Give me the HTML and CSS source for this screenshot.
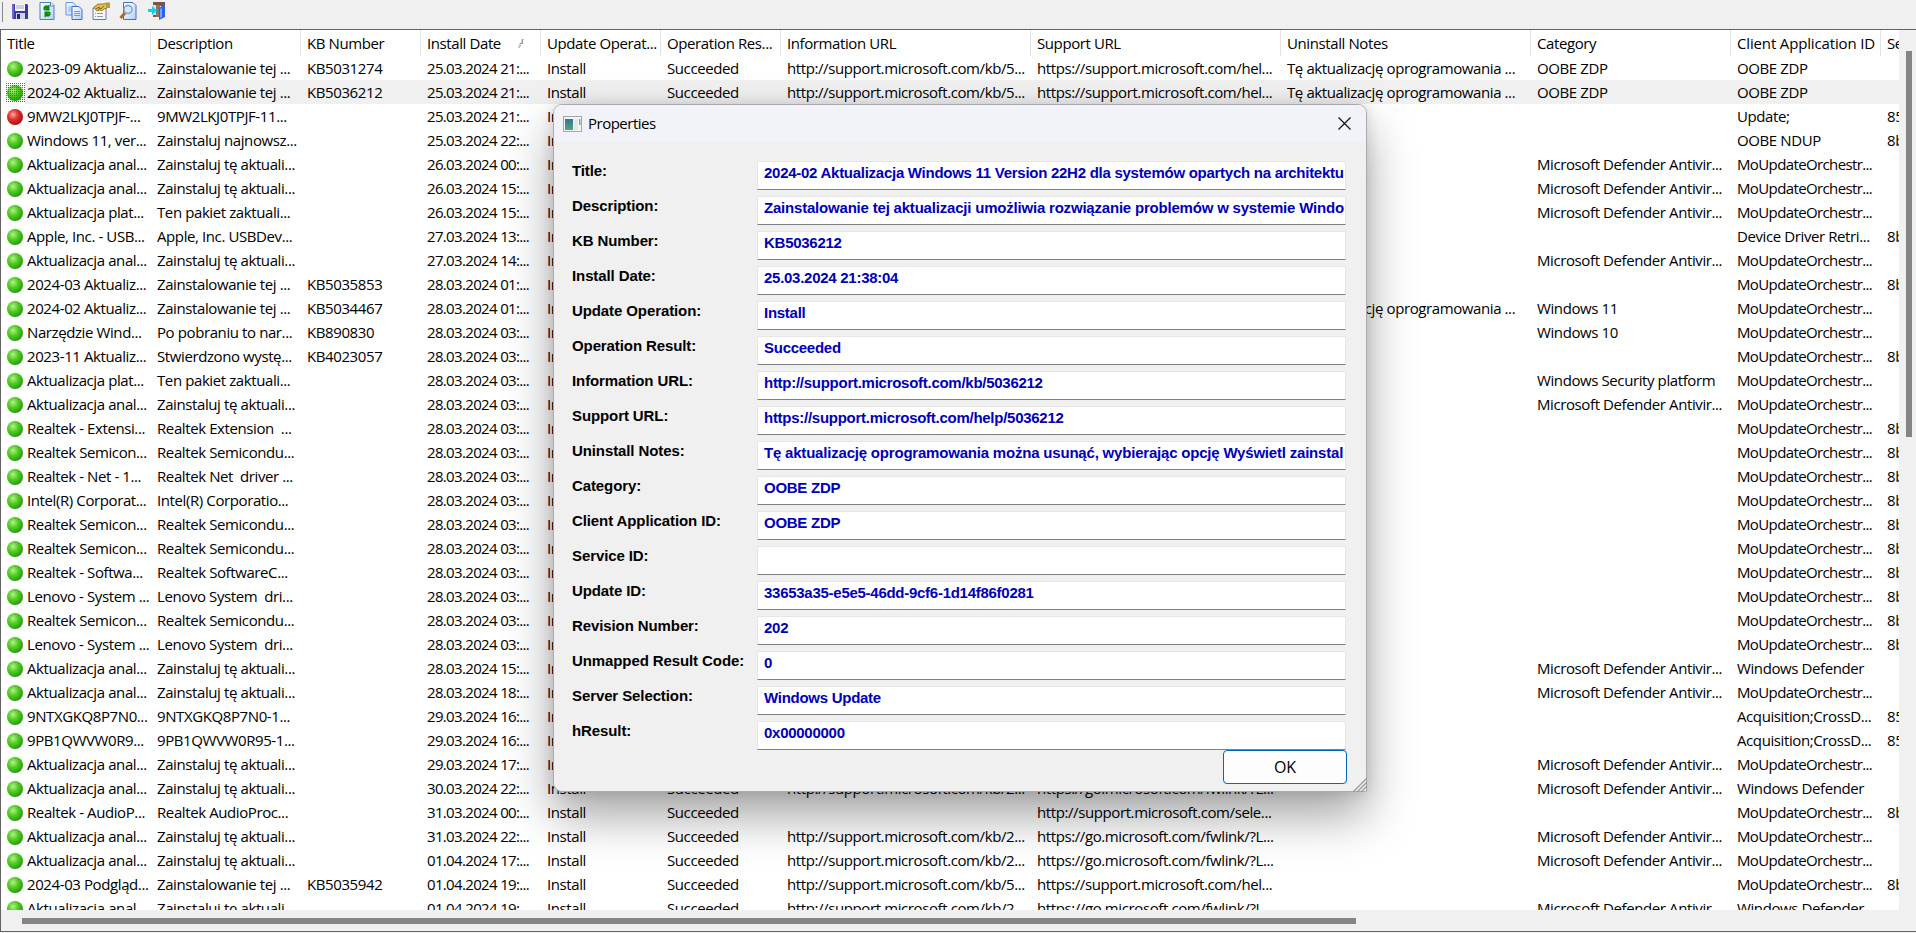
FILE: index.html
```html
<!DOCTYPE html>
<html lang="pl">
<head>
    <meta charset="UTF-8">
    <meta name="viewport" content="width=device-width, initial-scale=1.0">
    <title>Windows Update History</title>
    <link rel="stylesheet" href="styles.css">
</head>
<body>
    <div class="toolbar">
        <span class="grip"></span>
        <!-- save -->
        <svg class="tool" viewBox="0 0 18 18">
            <path d="M1 2h15l1 1v14H2l-1-1z" fill="#3a3aa4"/>
            <path d="M1 2h2v14H1z" fill="#6c6cc8"/>
            <rect x="4" y="2" width="10" height="7" fill="#f4f4f4"/>
            <path d="M5 4h8M5 6h8" stroke="#aaa"/>
            <rect x="5" y="11" width="9" height="6" fill="#cfd3e4"/>
            <rect x="6" y="12" width="3" height="5" fill="#25257c"/>
        </svg>
        <!-- refresh -->
        <svg class="tool" viewBox="0 0 18 18">
            <path d="M2 .5h11l3 3V17.500H2z" fill="url(#page)" stroke="#4f7fc4"/>
            <path d="M12.500.5v3.500h3.500" fill="#fff" stroke="#4f7fc4"/>
            <path d="M5.500 8V5L7 3.500h3l1.500-1v6h-5L8.500 6l-1 .5V8zM12.500 10v3L11 14.500H8l-1.500 1v-6h5L9.500 12l1-.5V10z" fill="#0a8a0a"/>
        </svg>
        <!-- copy -->
        <svg class="tool" viewBox="0 0 18 18">
            <path d="M1 .5h7l3 3V13H1z" fill="url(#page)" stroke="#6a94dc"/>
            <path d="M3 5h5M3 7h5M3 9h5" stroke="#8fb2ea"/>
            <path d="M7 4.500h7l3 3V17.500H7z" fill="url(#page)" stroke="#3f6fc8"/>
            <path d="M9 9.500h6M9 11.500h6M9 13.500h6" stroke="#6f9be0"/>
        </svg>
        <!-- properties -->
        <svg class="tool" viewBox="0 0 18 18">
            <path d="M1 6h13v11.500H1z" fill="#f3f7fd" stroke="#6c7c98"/>
            <path d="M3 11.500h1m1 0h6M3 14.500h1m1 0h6" stroke="#8898b4"/>
            <path d="M2 5l4-3h6l3-1v5l-3 1-2 2-2-1-3 1-2-2z" fill="#e4bd4c" stroke="#87661e" stroke-width=".8"/>
            <path d="M4 7l3-2 2 2 3-3M6 8l2-2" stroke="#6a4f16" fill="none" stroke-width=".8"/>
            <path d="M14 .5h4V6h-4z" fill="#b0a23a"/>
        </svg>
        <!-- find -->
        <svg class="tool" viewBox="0 0 18 18">
            <path d="M4.500.5H14l3 3V17.500H4.500z" fill="url(#page)" stroke="#4a6fc0"/>
            <path d="M6 11l-4.500 5" stroke="#b5642a" stroke-width="3"/>
            <circle cx="9" cy="7.500" r="4" fill="#cfeaff" stroke="#7f9cc4" stroke-width="1.400"/>
        </svg>
        <!-- exit -->
        <svg class="tool exit" viewBox="0 0 18 18">
            <path d="M5 0h12v4H5zM5 12h3v3H5z" fill="#80543a"/>
            <path d="M8 3h4v12H8z" fill="#8c7468"/>
            <path d="M5 3h3v10H5z" fill="#dcdce4"/>
            <path d="M11 6l6-4v13l-6 3z" fill="#2f62e8"/>
            <path d="M12 7l2-1v9l-2 1z" fill="#7aa2ff"/>
            <path d="M0 7h4V4l5 4.500L4 13v-3H0z" fill="#10d0ee"/>
        </svg>
        <svg class="defs" width="0" height="0">
            <defs>
                <linearGradient id="page" x1="0" y1="0" x2="1" y2="1">
                    <stop offset="0" stop-color="#fff"/>
                    <stop offset="1" stop-color="#b4d0f8"/>
                </linearGradient>
            </defs>
        </svg>
    </div>

    <div class="list">
        <div class="list-view">
            <div class="row header">
                <div>Title</div>
                <div>Description</div>
                <div>KB Number</div>
                <div>Install Date<svg class="sort" viewBox="0 0 8 9"><path d="M1 8h2V4.500h2v-4h1.500M5.500.5V5" fill="none" stroke="#999"/></svg></div>
                <div>Update Operat...</div>
                <div>Operation Res...</div>
                <div>Information URL</div>
                <div>Support URL</div>
                <div>Uninstall Notes</div>
                <div>Category</div>
                <div class="wide">Client Application ID</div>
                <div>Se</div>
            </div>
            <div id="rows"></div>
        </div>
        <div class="vscroll"><div class="vthumb"></div></div>
        <div class="hscroll"><div class="hthumb"></div></div>
    </div>

    <div class="dialog">
        <div class="titlebar">
            <svg class="app-icon" viewBox="0 0 20 16">
                <rect x=".5" y=".5" width="18" height="15" fill="#f2f4f6" stroke="#a4a8ae"/>
                <rect x="2" y="3" width="8" height="11" fill="url(#app)"/>
                <rect x="11" y="3" width="4" height="11" fill="#e4e6e8"/>
                <rect x="16" y="3" width="1.500" height="6" fill="#6fae9c"/>
                <defs>
                    <linearGradient id="app" x1="0" y1="0" x2="0" y2="1">
                        <stop offset="0" stop-color="#3d6f9e"/>
                        <stop offset="1" stop-color="#4fa878"/>
                    </linearGradient>
                </defs>
            </svg>
            <span class="caption">Properties</span>
            <svg class="close" viewBox="0 0 13 13"><path d="M.5.5l12 12M12.500.5l-12 12" stroke="#111" stroke-width="1.200"/></svg>
        </div>
        <div class="fields" id="fields"></div>
        <button class="ok">OK</button>
        <svg class="resize" viewBox="0 0 15 15"><path d="M1 15L15 1M5 15L15 5M9 15l6-6" stroke="#999" stroke-width="1.300"/></svg>
    </div>

    <script>
        const ANAL = 'Aktualizacja anal...';
        const ZAIN = 'Zainstaluj tę aktuali...';
        const TEJ = 'Zainstalowanie tej ...';
        const MDA = 'Microsoft Defender Antivir...';
        const MO = 'MoUpdateOrchestr...';
        const KB5 = 'http://support.microsoft.com/kb/5...';
        const KB2 = 'http://support.microsoft.com/kb/2...';
        const HEL = 'https://support.microsoft.com/hel...';
        const GO = 'https://go.microsoft.com/fwlink/?L...';
        const NOTE = 'Tę aktualizację oprogramowania ...';

        // title, description, kb, date, category, client, service, info url, support url, notes
        const data = [
            ['2023-09 Aktualiz...', TEJ, 'KB5031274', '25.03.2024 21:...', 'OOBE ZDP', 'OOBE ZDP', '', KB5, HEL, NOTE],
            ['2024-02 Aktualiz...', TEJ, 'KB5036212', '25.03.2024 21:...', 'OOBE ZDP', 'OOBE ZDP', '', KB5, HEL, NOTE],
            ['9MW2LKJ0TPJF-...', '9MW2LKJ0TPJF-11...', '', '25.03.2024 21:...', '', 'Update;', '85'],
            ['Windows 11, ver...', 'Zainstaluj najnowsz...', '', '25.03.2024 22:...', '', 'OOBE NDUP', '8b'],
            [ANAL, ZAIN, '', '26.03.2024 00:...', MDA, MO, ''],
            [ANAL, ZAIN, '', '26.03.2024 15:...', MDA, MO, ''],
            ['Aktualizacja plat...', 'Ten pakiet zaktuali...', '', '26.03.2024 15:...', MDA, MO, ''],
            ['Apple, Inc. - USB...', 'Apple, Inc. USBDev...', '', '27.03.2024 13:...', '', 'Device Driver Retri...', '8b'],
            [ANAL, ZAIN, '', '27.03.2024 14:...', MDA, MO, ''],
            ['2024-03 Aktualiz...', TEJ, 'KB5035853', '28.03.2024 01:...', '', MO, '8b'],
            ['2024-02 Aktualiz...', TEJ, 'KB5034467', '28.03.2024 01:...', 'Windows 11', MO, '', '', '', NOTE],
            ['Narzędzie Wind...', 'Po pobraniu to nar...', 'KB890830', '28.03.2024 03:...', 'Windows 10', MO, ''],
            ['2023-11 Aktualiz...', 'Stwierdzono wystę...', 'KB4023057', '28.03.2024 03:...', '', MO, '8b'],
            ['Aktualizacja plat...', 'Ten pakiet zaktuali...', '', '28.03.2024 03:...', 'Windows Security platform', MO, ''],
            [ANAL, ZAIN, '', '28.03.2024 03:...', MDA, MO, ''],
            ['Realtek - Extensi...', 'Realtek Extension  ...', '', '28.03.2024 03:...', '', MO, '8b'],
            ['Realtek Semicon...', 'Realtek Semicondu...', '', '28.03.2024 03:...', '', MO, '8b'],
            ['Realtek - Net - 1...', 'Realtek Net  driver ...', '', '28.03.2024 03:...', '', MO, '8b'],
            ['Intel(R) Corporat...', 'Intel(R) Corporatio...', '', '28.03.2024 03:...', '', MO, '8b'],
            ['Realtek Semicon...', 'Realtek Semicondu...', '', '28.03.2024 03:...', '', MO, '8b'],
            ['Realtek Semicon...', 'Realtek Semicondu...', '', '28.03.2024 03:...', '', MO, '8b'],
            ['Realtek - Softwa...', 'Realtek SoftwareC...', '', '28.03.2024 03:...', '', MO, '8b'],
            ['Lenovo - System ...', 'Lenovo System  dri...', '', '28.03.2024 03:...', '', MO, '8b'],
            ['Realtek Semicon...', 'Realtek Semicondu...', '', '28.03.2024 03:...', '', MO, '8b'],
            ['Lenovo - System ...', 'Lenovo System  dri...', '', '28.03.2024 03:...', '', MO, '8b'],
            [ANAL, ZAIN, '', '28.03.2024 15:...', MDA, 'Windows Defender', ''],
            [ANAL, ZAIN, '', '28.03.2024 18:...', MDA, MO, ''],
            ['9NTXGKQ8P7N0...', '9NTXGKQ8P7N0-1...', '', '29.03.2024 16:...', '', 'Acquisition;CrossD...', '85'],
            ['9PB1QWVW0R9...', '9PB1QWVW0R95-1...', '', '29.03.2024 16:...', '', 'Acquisition;CrossD...', '85'],
            [ANAL, ZAIN, '', '29.03.2024 17:...', MDA, MO, ''],
            [ANAL, ZAIN, '', '30.03.2024 22:...', MDA, 'Windows Defender', '', KB2, GO],
            ['Realtek - AudioP...', 'Realtek AudioProc...', '', '31.03.2024 00:...', '', MO, '8b', '', 'http://support.microsoft.com/sele...'],
            [ANAL, ZAIN, '', '31.03.2024 22:...', MDA, MO, '', KB2, GO],
            [ANAL, ZAIN, '', '01.04.2024 17:...', MDA, MO, '', KB2, GO],
            ['2024-03 Podgląd...', TEJ, 'KB5035942', '01.04.2024 19:...', '', MO, '8b', KB5, HEL],
            [ANAL, ZAIN, '', '01.04.2024 19:...', MDA, 'Windows Defender', '', KB2, GO]
        ];

        const rows = document.getElementById('rows');
        data.forEach((d, i) => {
            const row = document.createElement('div');
            row.className = 'row' + (i === 1 ? ' selected' : '');
            // the result column is behind the dialog for the middle rows
            const result = i < 2 || i > 29 ? 'Succeeded' : '';
            const cells = [d[0], d[1], d[2], d[3], 'Install', result, d[7], d[8], d[9], d[4], d[5], d[6]];
            cells.forEach((text, c) => {
                const cell = document.createElement('div');
                if (c === 0) {
                    const dot = document.createElement('span');
                    dot.className = 'dot' + (i === 2 ? ' red' : '');
                    cell.appendChild(dot);
                }
                if (c === 3) cell.className = 'date';
                if (text === MO) cell.className = 'tight';
                cell.append(text || '');
                row.appendChild(cell);
            });
            rows.appendChild(row);
        });

        const props = [
            ['Title:', '2024-02 Aktualizacja Windows 11 Version 22H2 dla systemów opartych na architektu'],
            ['Description:', 'Zainstalowanie tej aktualizacji umożliwia rozwiązanie problemów w systemie Windo'],
            ['KB Number:', 'KB5036212'],
            ['Install Date:', '25.03.2024 21:38:04'],
            ['Update Operation:', 'Install'],
            ['Operation Result:', 'Succeeded'],
            ['Information URL:', 'http://support.microsoft.com/kb/5036212'],
            ['Support URL:', 'https://support.microsoft.com/help/5036212'],
            ['Uninstall Notes:', 'Tę aktualizację oprogramowania można usunąć, wybierając opcję Wyświetl zainstal'],
            ['Category:', 'OOBE ZDP'],
            ['Client Application ID:', 'OOBE ZDP'],
            ['Service ID:', ''],
            ['Update ID:', '33653a35-e5e5-46dd-9cf6-1d14f86f0281'],
            ['Revision Number:', '202'],
            ['Unmapped Result Code:', '0'],
            ['Server Selection:', 'Windows Update'],
            ['hResult:', '0x00000000']
        ];
        const fields = document.getElementById('fields');
        props.forEach(([name, value], i) => {
            const label = document.createElement('div');
            label.className = 'label';
            label.textContent = name;
            const box = document.createElement('div');
            box.className = 'value' + (i === 1 || i === 8 ? ' loose' : '');
            box.textContent = value;
            fields.append(label, box);
        });
    </script>
</body>
</html>
```

FILE: styles.css
```css
* {
    margin: 0;
    padding: 0;
    box-sizing: border-box;
}
body {
    position: relative;
    width: 1916px;
    height: 933px;
    background: #f0f0f0;
    font-family: "Open Sans", "Noto Sans", sans-serif;
    font-size: 15px;
    color: #000;
    overflow: hidden;
}
.toolbar {
    display: flex;
    height: 29px;
    padding: 2px 0 0 2px;
}
.grip {
    width: 1px;
    height: 20px;
    margin-right: 8px;
    background: #8a8a8a;
}
.tool {
    width: 18px;
    height: 18px;
    margin-right: 9px;
}
.exit {
    margin-left: 2px;
}
.defs {
    position: absolute;
}
/* list */
.list {
    display: grid;
    grid-template-columns: 1898px 17px;
    grid-template-rows: 880px 21px;
    border: 1px solid #646464;
    border-right: 0;
}
.list-view {
    background: #fff;
    overflow: hidden;
    border-radius: 0 0 3px 0;
}
.row {
    display: grid;
    grid-template-columns: 150px 150px 120px 120px 120px 120px 250px 250px 250px 200px 150px 100px;
    height: 24px;
    line-height: 24px;
}
.row div {
    padding-left: 6px;
    white-space: pre;
    letter-spacing: -0.4px;
}
.row .date {
    letter-spacing: -0.66px;
}
.row .wide {
    letter-spacing: -0.15px;
}
.row .tight {
    letter-spacing: -0.62px;
}
.header {
    height: 26px;
    line-height: 26px;
}
.header div {
    border-right: 1px solid #e2e2e2;
}
.sort {
    width: 8px;
    height: 9px;
    margin-left: 16px;
    vertical-align: 1px;
}
.selected {
    background: linear-gradient(#f0f0f0, #f0f0f0) 24px 0 no-repeat;
}
.dot {
    display: inline-block;
    width: 16px;
    height: 16px;
    margin-right: 4px;
    border-radius: 50%;
    vertical-align: -3px;
    background: radial-gradient(circle at 38% 35%, #b8f08c 0, #54cc26 35%, #239a08 75%, #7cc46c 100%);
}
.red {
    background: radial-gradient(circle at 38% 35%, #ffa8a0 0, #e03030 35%, #b00c0c 75%, #d87c7c 100%);
}
.selected .dot {
    position: relative;
}
.selected .dot::after {
    content: "";
    position: absolute;
    inset: -2px;
    background: conic-gradient(#0a78d4 0 25%, transparent 0) 0 0 / 2px 2px;
}
/* scrollbars */
.vscroll {
    padding: 21px 0 0 7px;
}
.vthumb {
    width: 6px;
    height: 386px;
    background: #858585;
}
.hscroll {
    grid-column: 1 / 3;
    padding: 8px 0 0 21px;
}
.hthumb {
    width: 1334px;
    height: 6px;
    background: #858585;
}
/* dialog */
.dialog {
    position: absolute;
    left: 553px;
    top: 104px;
    width: 814px;
    height: 688px;
    background: #f0f0f0;
    border: 1px solid #aaa;
    border-radius: 9px 9px 0 9px;
    box-shadow: 0 24px 48px rgba(0, 0, 0, 0.36), 0 0 14px rgba(0, 0, 0, 0.12);
}
.titlebar {
    display: flex;
    align-items: center;
    height: 37px;
    padding: 0 15px 0 9px;
    background: #f2f3f9;
    border-radius: 8px 8px 0 0;
}
.app-icon {
    width: 20px;
    height: 16px;
    margin-right: 5px;
}
.caption {
    flex: 1;
    padding-bottom: 2px;
    letter-spacing: -0.5px;
}
.close {
    width: 13px;
    height: 13px;
}
.fields {
    display: grid;
    grid-template-columns: 185px 589px;
    grid-auto-rows: 29px;
    row-gap: 6px;
    padding: 19px 0 0 18px;
    font-family: "Liberation Sans", Arial, sans-serif;
    font-size: 15px;
    font-weight: bold;
}
.label {
    line-height: 20px;
    letter-spacing: -0.1px;
}
.value {
    padding-left: 6px;
    background: #fff;
    border: 1px solid #e6e6e6;
    border-bottom-color: #808080;
    color: #0000b8;
    line-height: 21px;
    letter-spacing: -0.27px;
    white-space: nowrap;
    overflow: hidden;
}
.loose {
    letter-spacing: -0.2px;
}
.ok {
    position: absolute;
    right: 19px;
    top: 645px;
    width: 124px;
    height: 34px;
    border: 1px solid #0067c0;
    border-radius: 4px;
    background: #fdfdfd;
    font-family: "Open Sans", sans-serif;
    font-size: 16px;
    color: #000;
}
.resize {
    position: absolute;
    right: -1px;
    bottom: -1px;
    width: 15px;
    height: 15px;
}
```
